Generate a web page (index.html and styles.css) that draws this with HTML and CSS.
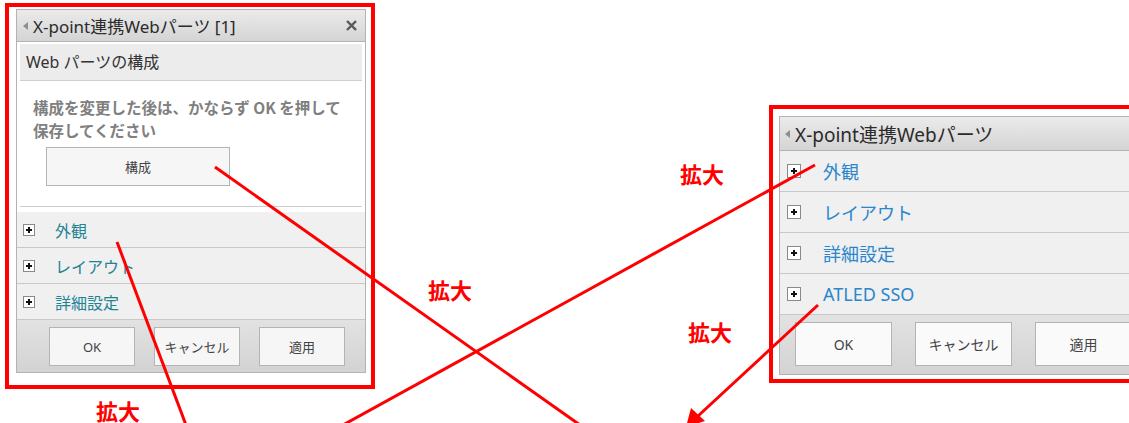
FILE: index.html
```html
<!DOCTYPE html>
<html lang="ja">
<head>
<meta charset="utf-8">
<title>X-point連携Webパーツ</title>
<link rel="stylesheet" href="styles.css">
</head>
<body>
<div class="canvas">
  <div class="frame frame-left">
    <div class="panel panel-small">
      <div class="titlebar">
        <span class="tri"></span>
        <span class="title">X-point連携Webパーツ [1]</span>
        <svg class="close" viewBox="0 0 12 12" width="11" height="11"><path d="M2 2L10 10M10 2L2 10" stroke="#5a5a5a" stroke-width="2.6" stroke-linecap="square"/></svg>
      </div>
      <div class="config">
        <div class="config-head">Web パーツの構成</div>
        <div class="config-body">
          <p class="desc">構成を変更した後は、かならず OK を押して<br>保存してください</p>
          <button class="btn btn-config">構成</button>
        </div>
      </div>
      <div class="rows">
        <div class="row"><span class="plus"></span><span class="label">外観</span></div>
        <div class="row"><span class="plus"></span><span class="label">レイアウト</span></div>
        <div class="row"><span class="plus"></span><span class="label">詳細設定</span></div>
      </div>
      <div class="footer">
        <button class="btn">OK</button>
        <button class="btn">キャンセル</button>
        <button class="btn">適用</button>
      </div>
    </div>
  </div>

  <div class="frame frame-right">
    <div class="panel panel-large">
      <div class="titlebar">
        <span class="tri"></span>
        <span class="title">X-point連携Webパーツ</span>
        <svg class="close" viewBox="0 0 12 12" width="12" height="12"><path d="M2 2L10 10M10 2L2 10" stroke="#5a5a5a" stroke-width="2.6" stroke-linecap="square"/></svg>
      </div>
      <div class="rows">
        <div class="row"><span class="plus"></span><span class="label">外観</span></div>
        <div class="row"><span class="plus"></span><span class="label">レイアウト</span></div>
        <div class="row"><span class="plus"></span><span class="label">詳細設定</span></div>
        <div class="row"><span class="plus"></span><span class="label">ATLED SSO</span></div>
      </div>
      <div class="footer">
        <button class="btn">OK</button>
        <button class="btn">キャンセル</button>
        <button class="btn">適用</button>
      </div>
    </div>
  </div>
</div>

<svg class="annot" width="1129" height="423" viewBox="0 0 1129 423">
  <g stroke="#ff0000" stroke-width="3" fill="none" stroke-linecap="butt">
    <line x1="215" y1="167" x2="580" y2="425"/>
    <line x1="117" y1="242" x2="186" y2="425"/>
    <line x1="815" y1="165" x2="343" y2="425"/>
    <line x1="818" y1="305" x2="698" y2="416"/>
  </g>
  <polygon points="686,427 691,408 705,421" fill="#ff0000"/>
</svg>
<span class="zoom-label z1">拡大</span>
<span class="zoom-label z2">拡大</span>
<span class="zoom-label z3">拡大</span>
<span class="zoom-label z4">拡大</span>
</body>
</html>
```

FILE: styles.css
```css
html, body {
  margin: 0;
  padding: 0;
  background: #ffffff;
}
body {
  width: 1129px;
  height: 423px;
  overflow: hidden;
  position: relative;
  font-family: "Noto Sans", "Noto Sans CJK JP", sans-serif;
  color: #333;
}
.canvas {
  display: flex;
  align-items: flex-start;
}
.frame {
  border: 4px solid #ff0000;
  background: #fff;
  flex: none;
}
.frame-left {
  margin: 3px 0 0 5px;
  padding: 2px 5px 12px 7px;
}
.frame-right {
  margin: 105px 0 0 394px;
  padding: 7px 0 4px 6px;
}
.panel {
  border: 1px solid #b3b3b3;
  background: #fff;
  box-sizing: border-box;
}
.panel-small { width: 350px; }
.panel-large { width: 372px; }

.titlebar {
  display: flex;
  align-items: center;
  background: linear-gradient(#ebebeb, #d4d4d4);
  border-bottom: 1px solid #b3b3b3;
  padding: 0 8px 0 6px;
}
.panel-small .titlebar { height: 31px; }
.panel-large .titlebar { height: 33px; padding-left: 5px; }
.tri {
  width: 0;
  height: 0;
  border-top: 4px solid transparent;
  border-bottom: 4px solid transparent;
  border-right: 5px solid #8e8e8e;
  margin-right: 5px;
}
.title {
  flex: 1;
  color: #2b2b2b;
  white-space: nowrap;
}
.panel-small .title { font-size: 17px; }
.panel-large .title { font-size: 19px; }
.close { flex: none; }

.config {
  padding: 2px 3px 5px;
  background: #fff;
}
.config-head {
  height: 36px;
  line-height: 36px;
  background: #ececec;
  border-bottom: 1px solid #cfcfcf;
  padding-left: 6px;
  font-size: 16px;
  color: #333;
}
.config-body {
  border-bottom: 1px solid #cdcdcd;
  padding: 15px 0 20px 13px;
}
.desc {
  margin: 0 0 5px;
  font-family: "Noto Sans CJK JP", sans-serif;
  font-size: 15.5px;
  font-weight: bold;
  line-height: 23px;
  color: #808080;
}
.btn {
  font-family: "Noto Sans", "Noto Sans CJK JP", sans-serif;
  background: #f6f6f6;
  border: 1px solid #b4b4b4;
  color: #444;
  font-size: 13px;
  padding: 0;
  margin: 0;
  box-sizing: border-box;
}
.btn-config {
  width: 184px;
  height: 39px;
  margin-left: 13px;
}

.rows {
  background: #f0f0f0;
}
.row {
  display: flex;
  align-items: center;
  border-bottom: 1px solid #c8c8c8;
  box-sizing: border-box;
}
.panel-small .row { height: 36px; padding-left: 6px; }
.panel-large .row { height: 41px; padding-left: 7px; }
.plus {
  position: relative;
  flex: none;
  background: #fff;
  border: 1px solid #8a8a8a;
  box-sizing: border-box;
}
.plus::before, .plus::after {
  content: "";
  position: absolute;
  background: #111;
}
.panel-small .plus { width: 12px; height: 12px; }
.panel-large .plus { width: 14px; height: 14px; }
.panel-small .plus::before { left: 2px; top: 4px; width: 6px; height: 2px; }
.panel-small .plus::after { left: 4px; top: 2px; width: 2px; height: 6px; }
.panel-large .plus::before { left: 3px; top: 5px; width: 6px; height: 2px; }
.panel-large .plus::after { left: 5px; top: 3px; width: 2px; height: 6px; }

.label { white-space: nowrap; }
.panel-small .label { font-size: 16px; color: #1f8494; margin-left: 20px; }
.panel-large .label { font-size: 18px; color: #2b86cb; margin-left: 22px; }

.footer {
  display: flex;
  background: linear-gradient(#e2e2e2, #d3d3d3);
}
.panel-small .footer { height: 52px; padding: 7px 0 0 32px; gap: 19px; box-sizing: border-box; }
.panel-small .footer .btn { width: 86px; height: 39px; }
.panel-large .footer { height: 59px; padding: 7px 0 0 15px; gap: 23px; box-sizing: border-box; }
.panel-large .footer .btn { width: 97px; height: 44px; font-size: 14px; background: #fafafa; }

.annot {
  position: absolute;
  left: 0;
  top: 0;
  pointer-events: none;
}
.zoom-label {
  position: absolute;
  font-family: "Noto Sans CJK JP", sans-serif;
  font-weight: bold;
  font-size: 22px;
  line-height: 24px;
  color: #ff0000;
}
.z1 { left: 96px; top: 398px; }
.z2 { left: 428px; top: 277px; }
.z3 { left: 680px; top: 161px; }
.z4 { left: 688px; top: 319px; }
```
